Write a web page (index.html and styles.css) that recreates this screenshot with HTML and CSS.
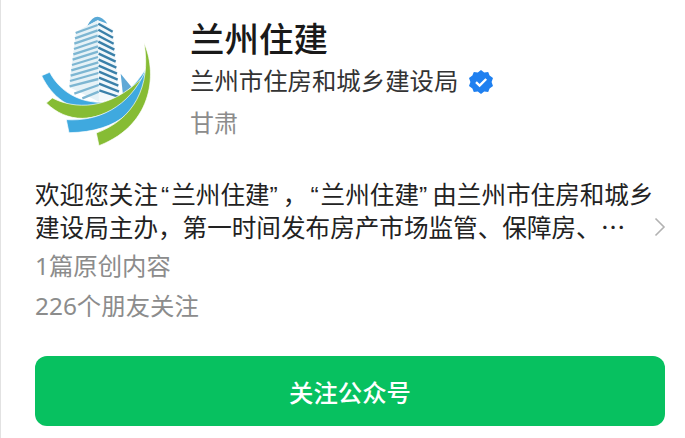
FILE: index.html
```html
<!DOCTYPE html>
<html lang="zh-CN">
<head>
  <meta charset="UTF-8" />
  <title>兰州住建</title>
  <link rel="stylesheet" href="styles.css">
</head>
<body>
  <div class="header">
    <svg class="logo" viewBox="60 40 345 402" aria-hidden="true">
      <path d="M205 78 Q232 28 265 72 L236 62Z" fill="#5aa9d6"/>
      <path d="M305 222 L340 265 L312 286Z" fill="#5fa8d6"/>
      <path d="M171 96 L236 62 L240 306 L150 262Z" fill="#e6f2f7"/>
      <path d="M236 62 L281 88 L302 292 L240 306Z" fill="#f2f8fb"/>
      <g class="stripes-left">
        <path d="M170 100 L236 76"/><path d="M168 116 L236 92"/><path d="M166 132 L236 108"/>
        <path d="M165 148 L236 124"/><path d="M163 164 L237 140"/><path d="M161 180 L237 156"/>
        <path d="M159 196 L237 172"/><path d="M157 212 L238 188"/><path d="M155 228 L238 204"/>
        <path d="M153 244 L238 220"/><path d="M152 260 L238 238"/><path d="M166 282 L239 256"/>
        <path d="M190 296 L239 276"/>
      </g>
      <g class="stripes-right">
        <path d="M238 72 L281 96"/><path d="M238 90 L282 114"/><path d="M238 108 L284 132"/>
        <path d="M238 126 L286 150"/><path d="M238 144 L288 168"/><path d="M239 162 L290 186"/>
        <path d="M239 180 L292 204"/><path d="M239 198 L294 222"/><path d="M240 216 L296 240"/>
        <path d="M240 234 L298 258"/><path d="M240 252 L300 276"/><path d="M241 272 L300 292"/>
      </g>
      <path class="arc-blue" d="M68 228 L92 218 C125 280 185 308 245 308 C295 306 345 265 380 208 C360 285 300 328 235 332 C155 336 98 292 68 228Z"/>
      <path class="arc-green" d="M82 310 L100 295 C165 328 270 335 372 232 C340 304 265 354 190 356 C150 356 112 340 82 310Z"/>
      <path class="arc-blue" d="M142 360 C235 366 330 325 380 212 C380 320 300 398 150 399Z"/>
      <path class="arc-green" d="M375 130 C412 210 410 372 240 438 L232 400 C343 360 398 260 375 130Z"/>
    </svg>
    <div class="info">
      <h1 class="name">兰州住建</h1>
      <div class="owner">
        <span>兰州市住房和城乡建设局</span>
        <svg class="badge" viewBox="0 0 24 24" aria-hidden="true">
          <path d="M12 0 L15.2 2.4 L19.2 2 L20.6 5.6 L24 8 L22.6 12 L24 16 L20.6 18.4 L19.2 22 L15.2 21.6 L12 24 L8.8 21.6 L4.8 22 L3.4 18.4 L0 16 L1.4 12 L0 8 L3.4 5.6 L4.8 2 L8.8 2.4Z" fill="#1f80f0"/>
          <path d="M7 12.2 L10.6 15.6 L17.2 9" fill="none" stroke="#fff" stroke-width="2.4"/>
        </svg>
      </div>
      <div class="region">甘肃</div>
    </div>
  </div>

  <div class="desc-row">
    <p class="desc">欢迎您关注<span class="q-open">“</span>兰州住建<span class="q-close">”</span>，<span class="q-open">“</span>兰州住建<span class="q-close">”</span>由兰州市住房和城乡<br>建设局主办，第一时间发布房产市场监管、保障房、<span class="more">…</span></p>
    <svg class="chevron" viewBox="0 0 12 20" aria-hidden="true">
      <path d="M1.5 1.5 L10 10 L1.5 18.5" fill="none" stroke="#b2b2b2" stroke-width="1.6"/>
    </svg>
  </div>
  <div class="stat">1篇原创内容</div>
  <div class="stat">226个朋友关注</div>

  <button class="follow">关注公众号</button>
</body>
</html>
```

FILE: styles.css
```css
* {
  box-sizing: border-box;
}
html, body {
  height: 100%;
}
body {
  margin: 0;
  padding: 13px 19px 0 34px;
  background: #fff;
  border-left: 1px solid #e2e2e2;
  font-family: "Liberation Sans", "Noto Sans CJK SC", sans-serif;
  color: #191919;
  overflow: hidden;
}
.header {
  display: flex;
  align-items: flex-start;
}
.logo {
  width: 115px;
  height: 134px;
  margin-left: 4px;
  flex: none;
}
.stripes-left path {
  fill: none;
  stroke: #7db6d2;
  stroke-width: 7;
}
.stripes-right path {
  fill: none;
  stroke: #3a80a9;
  stroke-width: 7;
}
.arc-blue {
  fill: #3fa9df;
  stroke: #fff;
  stroke-width: 2;
}
.arc-green {
  fill: #86bc34;
  stroke: #fff;
  stroke-width: 2;
}
.info {
  margin-left: 36px;
  padding-top: 5px;
}
.name {
  margin: 0;
  font-size: 34.5px;
  line-height: 44px;
  font-weight: 500;
}
.owner {
  display: flex;
  align-items: center;
  gap: 11px;
  margin-top: 2px;
  font-size: 24.4px;
  line-height: 36px;
  color: #333;
}
.badge {
  width: 24px;
  height: 24px;
}
.region {
  margin-top: 6px;
  font-size: 24px;
  line-height: 36px;
  color: #8c8c8c;
}
.desc-row {
  display: flex;
  align-items: center;
  justify-content: space-between;
  margin-top: 34px;
}
.desc {
  margin: 0;
  font-size: 24.6px;
  line-height: 30px;
  white-space: nowrap;
  color: #222;
}
.q-open {
  margin: 0 2px 0 3px;
}
.q-close {
  margin-right: 5px;
}
.more {
  font-family: "Noto Sans CJK SC", sans-serif;
}
.chevron {
  width: 12px;
  height: 20px;
  margin-top: 28px;
}
.stat {
  margin-top: 4px;
  font-family: "Noto Sans", "Noto Sans CJK SC", sans-serif;
  font-size: 24.4px;
  line-height: 36px;
  color: #8c8c8c;
}
.follow {
  display: block;
  width: 630px;
  height: 70px;
  margin-top: 32px;
  border: none;
  border-radius: 12px;
  background: #07c160;
  color: #fff;
  font-family: inherit;
  font-size: 24.4px;
  font-weight: 500;
}
```
